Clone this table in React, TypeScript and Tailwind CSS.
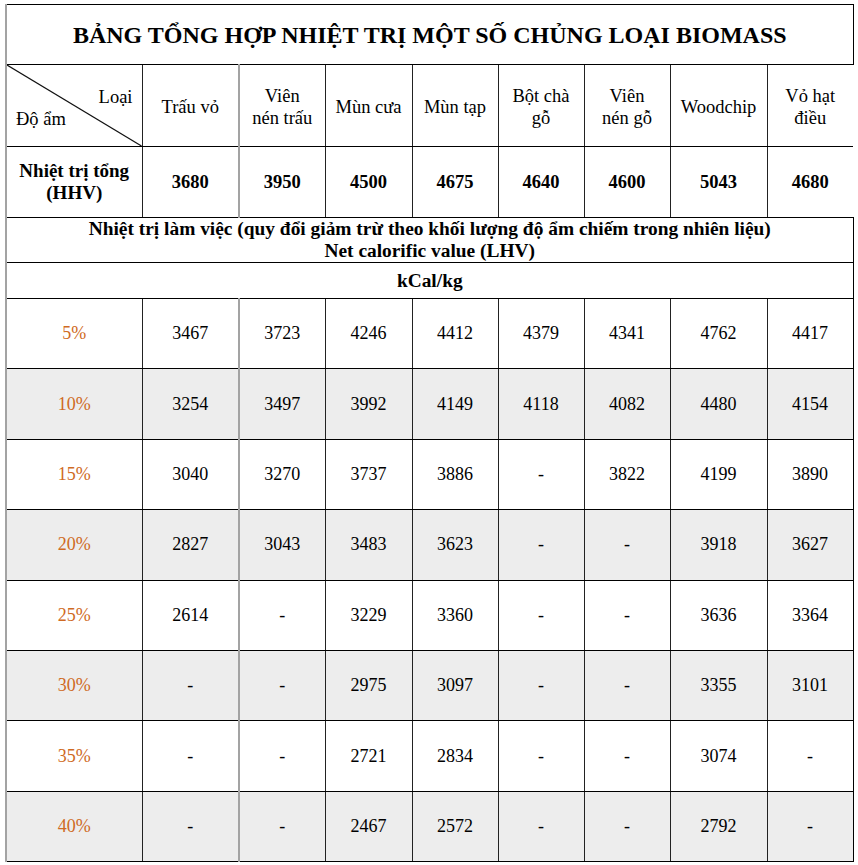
const HEAD = [["Trấu vỏ"], ["Viên", "nén trấu"], ["Mùn cưa"], ["Mùn tạp"], ["Bột chà", "gỗ"], ["Viên", "nén gỗ"], ["Woodchip"], ["Vỏ hạt", "điều"]];
const WIDTHS = ["w-[136px]", "w-[97px]", "w-[86px]", "w-[87px]", "w-[86px]", "w-[86px]", "w-[86px]", "w-[97px]", "w-[86px]"];
const HHV = ["3680", "3950", "4500", "4675", "4640", "4600", "5043", "4680"];

const ROWS = [
  { m: "5%", v: ["3467", "3723", "4246", "4412", "4379", "4341", "4762", "4417"] },
  { m: "10%", v: ["3254", "3497", "3992", "4149", "4118", "4082", "4480", "4154"] },
  { m: "15%", v: ["3040", "3270", "3737", "3886", "-", "3822", "4199", "3890"] },
  { m: "20%", v: ["2827", "3043", "3483", "3623", "-", "-", "3918", "3627"] },
  { m: "25%", v: ["2614", "-", "3229", "3360", "-", "-", "3636", "3364"] },
  { m: "30%", v: ["-", "-", "2975", "3097", "-", "-", "3355", "3101"] },
  { m: "35%", v: ["-", "-", "2721", "2834", "-", "-", "3074", "-"] },
  { m: "40%", v: ["-", "-", "2467", "2572", "-", "-", "2792", "-"] },
];

// column index 0 gets the grey left rule, index 2 too
function edge(i: number) {
  if (i === 0 || i === 2) return "border-l-2 border-l-[#a3a3a3]";
  return "border-l border-l-[#222]";
}

export default function App() {
  return (
    <div className="min-h-screen bg-white pl-[5px] pt-[4px] text-black" style={{ fontFamily: '"Liberation Serif", "Times New Roman", serif' }}>
      <table className="table-fixed border-collapse">
        <colgroup>
          {WIDTHS.map((w, i) => (
            <col key={i} className={w} />
          ))}
        </colgroup>
        <tbody>
          <tr className="h-[60px]">
            <td colSpan={9} className="border border-black border-l-2 border-l-[#a3a3a3] text-center text-[24px] font-bold">
              BẢNG TỔNG HỢP NHIỆT TRỊ MỘT SỐ CHỦNG LOẠI BIOMASS
            </td>
          </tr>
          <tr className="h-[82px] text-[18.5px] leading-[22px]">
            <td className="relative border-y border-y-black border-l-2 border-l-[#a3a3a3] p-0">
              <svg className="absolute inset-0 h-full w-full" preserveAspectRatio="none" viewBox="0 0 100 100">
                <line x1="0" y1="0" x2="100" y2="100" stroke="#111" strokeWidth="1.2" vectorEffect="non-scaling-stroke" />
              </svg>
              <div className="relative flex flex-col px-[9px] pt-[4px]">
                <span className="self-end">Loại</span>
                <span className="self-start">Độ ẩm</span>
              </div>
            </td>
            {HEAD.map((h, i) => (
              <td key={i} className={`border-y border-y-black ${edge(i + 1)} pt-[3px] text-center`}>
                {h.map((l) => (
                  <div key={l}>{l}</div>
                ))}
              </td>
            ))}
          </tr>
          <tr className="h-[71px] text-[19px] font-bold leading-[22px]">
            <td className="border-y border-y-black border-l-2 border-l-[#a3a3a3] text-center">
              <div>Nhiệt trị tổng</div>
              <div>(HHV)</div>
            </td>
            {HHV.map((v, i) => (
              <td key={i} className={`border-y border-y-black ${edge(i + 1)} text-center text-[18.5px]`}>
                {v}
              </td>
            ))}
          </tr>
          <tr className="h-[45px] text-[19.4px] font-bold leading-[22px]">
            <td colSpan={9} className="border border-black border-l-2 border-l-[#a3a3a3] text-center">
              <div>Nhiệt trị làm việc (quy đổi giảm trừ theo khối lượng độ ẩm chiếm trong nhiên liệu)</div>
              <div>Net calorific value (LHV)</div>
            </td>
          </tr>
          <tr className="h-[36px] text-[19.4px] font-bold">
            <td colSpan={9} className="border border-black border-l-2 border-l-[#a3a3a3] text-center">
              kCal/kg
            </td>
          </tr>
          {ROWS.map((r, ri) => (
            <tr key={r.m} className={`h-[70.4px] text-[18px] ${ri % 2 === 1 ? "bg-[#ededed]" : "bg-white"}`}>
              <td className="border-y border-y-black border-l-2 border-l-[#a3a3a3] text-center text-[#cf6a23]">{r.m}</td>
              {r.v.map((v, i) => (
                <td key={i} className={`border-y border-y-black ${edge(i + 1)} ${i === 7 ? "border-r border-r-black" : ""} text-center`}>
                  {v}
                </td>
              ))}
            </tr>
          ))}
        </tbody>
      </table>
    </div>
  );
}
